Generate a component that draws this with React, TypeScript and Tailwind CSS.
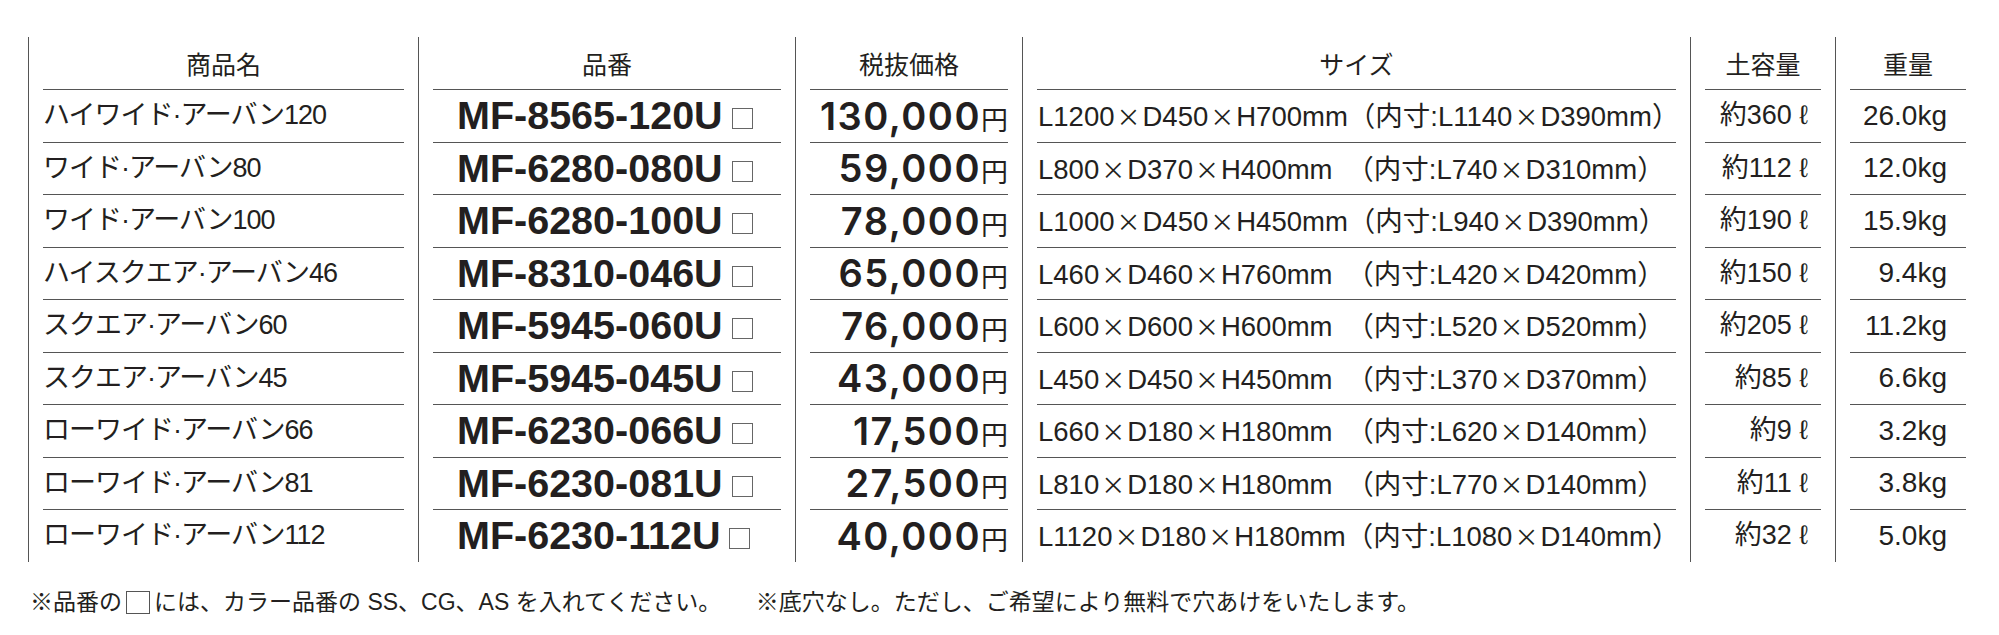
import React from 'react';

type Row = {
  name: string;
  code: string;
  price: string;
  size: string;
  soil: string;
  weight: string;
};

const rows: Row[] = [
  { name: 'ハイワイド·アーバン120', code: 'MF-8565-120U', price: '130,000', size: 'L1200×D450×H700mm（内寸:L1140×D390mm）', soil: '約360', weight: '26.0kg' },
  { name: 'ワイド·アーバン80', code: 'MF-6280-080U', price: '59,000', size: 'L800×D370×H400mm　（内寸:L740×D310mm）', soil: '約112', weight: '12.0kg' },
  { name: 'ワイド·アーバン100', code: 'MF-6280-100U', price: '78,000', size: 'L1000×D450×H450mm（内寸:L940×D390mm）', soil: '約190', weight: '15.9kg' },
  { name: 'ハイスクエア·アーバン46', code: 'MF-8310-046U', price: '65,000', size: 'L460×D460×H760mm　（内寸:L420×D420mm）', soil: '約150', weight: '9.4kg' },
  { name: 'スクエア·アーバン60', code: 'MF-5945-060U', price: '76,000', size: 'L600×D600×H600mm　（内寸:L520×D520mm）', soil: '約205', weight: '11.2kg' },
  { name: 'スクエア·アーバン45', code: 'MF-5945-045U', price: '43,000', size: 'L450×D450×H450mm　（内寸:L370×D370mm）', soil: '約85', weight: '6.6kg' },
  { name: 'ローワイド·アーバン66', code: 'MF-6230-066U', price: '17,500', size: 'L660×D180×H180mm　（内寸:L620×D140mm）', soil: '約9', weight: '3.2kg' },
  { name: 'ローワイド·アーバン81', code: 'MF-6230-081U', price: '27,500', size: 'L810×D180×H180mm　（内寸:L770×D140mm）', soil: '約11', weight: '3.8kg' },
  { name: 'ローワイド·アーバン112', code: 'MF-6230-112U', price: '40,000', size: 'L1120×D180×H180mm（内寸:L1080×D140mm）', soil: '約32', weight: '5.0kg' },
];

const headers = ['商品名', '品番', '税抜価格', 'サイズ', '土容量', '重量'];

// Latin glyphs from Liberation Sans, kana/kanji fall through to Noto CJK
const mixed = "font-['Liberation_Sans','Noto_Sans_CJK_JP',sans-serif]";
const jp = "font-['Noto_Sans_CJK_JP',sans-serif]";

function SizeText({ text }: { text: string }) {
  const parts = text.split(/([×（）　])/);
  return (
    <span className={`${mixed} text-[27.5px] leading-none whitespace-nowrap`}>
      {parts.map((p, i) =>
        p === '×' ? (
          <span key={i} className={`${jp} text-[24px] mx-[2px]`}>
            {p}
          </span>
        ) : p === '（' || p === '）' || p === '　' ? (
          <span key={i} className={jp}>
            {p}
          </span>
        ) : (
          <span key={i}>{p}</span>
        )
      )}
    </span>
  );
}

function Cell({ header, children, className = '' }: { header?: boolean; children: React.ReactNode; className?: string }) {
  return (
    <div className={`border-l border-[#555] px-[14px] ${header ? 'h-[52px]' : 'h-[52.5px]'}`}>
      <div className={`h-full flex items-center ${header ? 'justify-center' : 'border-t border-[#555]'} ${className}`}>
        {children}
      </div>
    </div>
  );
}

export default function App() {
  return (
    <div className="w-[1999px] h-[635px] bg-white text-[#231f20] pt-[37px] pl-[28px]">
      <div className="grid grid-cols-[390px_377px_227px_668px_145px_145px]">
        {headers.map((h) => (
          <Cell key={h} header>
            <span className={`${jp} text-[25px] leading-none`}>{h}</span>
          </Cell>
        ))}

        {rows.map((r) => (
          <React.Fragment key={r.code}>
            <Cell>
              <span className={`${mixed} text-[27px] tracking-[-1px] leading-none whitespace-nowrap`}>{r.name}</span>
            </Cell>
            <Cell className="pl-[24px]">
              <span className="leading-none whitespace-nowrap">
                <span className="font-['Liberation_Sans',sans-serif] font-bold text-[39.5px]">{r.code}</span>
                <span className="inline-block w-[21px] h-[21px] border border-[#666] ml-[9px]" />
              </span>
            </Cell>
            <Cell className="justify-end">
              <span className="leading-none whitespace-nowrap">
                <span className="font-['Inter',sans-serif] font-semibold text-[38px] tracking-[1.5px]">{r.price}</span>
                <span className={`${jp} text-[27px]`}>円</span>
              </span>
            </Cell>
            <Cell className="pl-[1px]">
              <SizeText text={r.size} />
            </Cell>
            <Cell className="justify-end pr-[13px]">
              <span className={`${mixed} text-[27px] leading-none whitespace-nowrap`}>
                {r.soil} ℓ
              </span>
            </Cell>
            <Cell className="justify-end pr-[19px]">
              <span className={`${mixed} text-[28px] leading-none whitespace-nowrap`}>{r.weight}</span>
            </Cell>
          </React.Fragment>
        ))}
      </div>

      <p className={`${mixed} text-[23px] leading-none mt-[29px] ml-[2px] whitespace-nowrap`}>
        ※品番の<span className="inline-block w-[24px] h-[23px] border border-[#555] mx-[4px] align-[-4px]" />には、カラー品番の SS、CG、AS を入れてください。　　※底穴なし。ただし、ご希望により無料で穴あけをいたします。
      </p>
    </div>
  );
}
